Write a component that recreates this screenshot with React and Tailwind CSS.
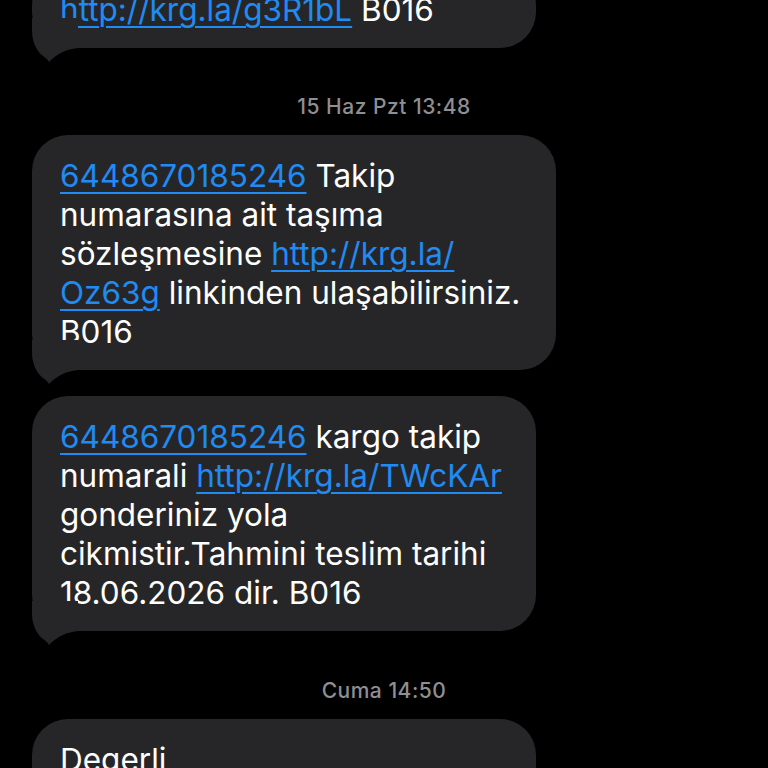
const Link = ({ children }) => (
  <span className="text-[#1f8bf3] underline decoration-[2px] underline-offset-[5px]">{children}</span>
);

const Tail = () => (
  <svg
    className="absolute left-0 bottom-[-14px]"
    width="46"
    height="44"
    viewBox="0 0 46 44"
  >
    <path
      d="M0 0 L0 12 C0 25 5 33 11 38 C14 40 16 42 17 44 C22 39 29 32 46 30 L46 0 Z"
      fill="#262628"
    />
  </svg>
);

const Bubble = ({ width, children, top = 'pt-[21px]' }) => (
  <div className={`relative self-start ${width}`}>
    <div className={`bg-[#262628] rounded-[36px] pl-[28px] pr-[20px] ${top} pb-[19px] text-white text-[31.5px] leading-[39px]`}>
      {children}
    </div>
    <Tail />
  </div>
);

const Stamp = ({ children }) => (
  <div className="text-center text-[#8e8e93] text-[21px] leading-[24px] font-medium tracking-[0.5px]">
    {children}
  </div>
);

export default function App() {
  return (
    <div
      className="w-[768px] h-[768px] overflow-hidden bg-black"
      style={{ fontFamily: 'Inter, "Noto Sans", sans-serif' }}
    >
      <div className="flex flex-col px-[32px] mt-[-30px]">
        <Bubble width="w-[504px]" top="pt-[20px]">
          <Link>http://krg.la/g3R1bL</Link> B016
        </Bubble>

        <div className="mt-[47px] mb-[16px]">
          <Stamp>15 Haz Pzt 13:48</Stamp>
        </div>

        <Bubble width="w-[524px]">
          <Link>6448670185246</Link> Takip
          <br />
          numarasına ait taşıma
          <br />
          sözleşmesine <Link>http://krg.la/</Link>
          <br />
          <Link>Oz63g</Link> linkinden ulaşabilirsiniz.
          <br />
          B016
        </Bubble>

        <div className="h-[26px]" />

        <Bubble width="w-[504px]">
          <Link>6448670185246</Link> kargo takip
          <br />
          numarali <Link>http://krg.la/TWcKAr</Link>
          <br />
          gonderiniz yola
          <br />
          cikmistir.Tahmini teslim tarihi
          <br />
          18.06.2026 dir. B016
        </Bubble>

        <div className="mt-[48px] mb-[16px]">
          <Stamp>Cuma 14:50</Stamp>
        </div>

        <Bubble width="w-[504px]">
          Degerli
          <br />
          müşterimiz
        </Bubble>
      </div>
    </div>
  );
}
